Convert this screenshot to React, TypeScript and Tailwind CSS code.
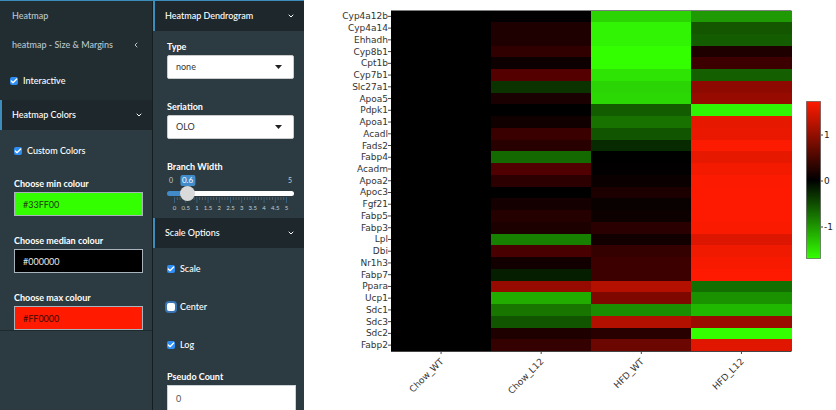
import { useId, useState } from "react";
import type { ReactNode } from "react";
import { Check, ChevronDown, ChevronLeft } from "lucide-react";

type Row = [gene: string, chowL12: string, hfdWt: string, hfdL12: string];

const rows: Row[] = [
  ["Cyp4a12b", "#020000", "#2cd404", "#1f9a04"],
  ["Cyp4a14", "#1e0000", "#31f404", "#145600"],
  ["Ehhadh", "#1e0000", "#31f404", "#145c00"],
  ["Cyp8b1", "#300000", "#33ff00", "#1e0000"],
  ["Cpt1b", "#0c0000", "#33ff00", "#3c0000"],
  ["Cyp7b1", "#540000", "#2ee405", "#146000"],
  ["Slc27a1", "#0b3300", "#2bd405", "#8e0a00"],
  ["Apoa5", "#1a0000", "#2cd804", "#960a00"],
  ["Pdpk1", "#000000", "#145c00", "#31f404"],
  ["Apoa1", "#100000", "#177200", "#e61800"],
  ["Acadl", "#3a0000", "#115500", "#ea1800"],
  ["Fads2", "#280000", "#082a00", "#fc1a00"],
  ["Fabp4", "#146a00", "#000000", "#e61800"],
  ["Acadm", "#500000", "#020000", "#f41a00"],
  ["Apoa2", "#2c0000", "#0a0000", "#fc1a00"],
  ["Apoc3", "#000000", "#1c0000", "#fe1a00"],
  ["Fgf21", "#140000", "#090000", "#fe1a00"],
  ["Fabp5", "#240000", "#0c0000", "#fe1a00"],
  ["Fabp3", "#1c0000", "#2a0000", "#fa1a00"],
  ["Lpl", "#188000", "#120000", "#dc1600"],
  ["Dbi", "#480000", "#340000", "#f01a00"],
  ["Nr1h3", "#120000", "#3c0000", "#f81a00"],
  ["Fabp7", "#061e00", "#3c0000", "#fe1a00"],
  ["Ppara", "#960a00", "#b41000", "#137000"],
  ["Ucp1", "#22ac00", "#7e0800", "#1a9200"],
  ["Sdc1", "#177500", "#1a8e00", "#21b800"],
  ["Sdc3", "#115500", "#b41000", "#9a0c00"],
  ["Sdc2", "#1e0000", "#280000", "#33ff00"],
  ["Fabp2", "#340000", "#6c0600", "#e01600"],
];

const samples = ["Chow_WT", "Chow_L12", "HFD_WT", "HFD_L12"];

const plot = { left: 87, top: 10.5, right: 487.5, bottom: 351 };
const cellW = (plot.right - plot.left) / samples.length;
const cellH = (plot.bottom - plot.top) / rows.length;

function Heatmap() {
  return (
    <svg
      viewBox="0 0 532 410"
      className="block h-auto w-full font-['DejaVu_Sans',sans-serif]"
      role="img"
      aria-label="Gene expression heatmap"
    >
      <defs>
        <linearGradient id="scale" x1="0" y1="0" x2="0" y2="1">
          <stop offset="0" stopColor="#ff1a00" />
          <stop offset="0.5" stopColor="#000000" />
          <stop offset="1" stopColor="#33ff00" />
        </linearGradient>
      </defs>

      <rect x={plot.left} y={plot.top} width={plot.right - plot.left} height={plot.bottom - plot.top} fill="#000" />
      {rows.map(([gene, ...cells], r) => {
        const y = plot.top + r * cellH;
        return (
          <g key={gene}>
            {cells.map((color, c) => (
              <rect
                key={c}
                x={plot.left + (c + 1) * cellW}
                y={y}
                width={cellW}
                height={cellH}
                fill={color}
                shapeRendering="crispEdges"
              />
            ))}
            <path d={`M${plot.left - 3} ${y + cellH / 2}h3`} stroke="#444" />
            <text x={plot.left - 3} y={y + cellH / 2 + 3} textAnchor="end" fontSize="9" fill="#333">
              {gene}
            </text>
          </g>
        );
      })}
      <path d={`M${plot.left} ${plot.bottom + 0.5}H${plot.right}`} stroke="#444" />

      {samples.map((name, c) => {
        const x = plot.left + (c + 0.5) * cellW;
        return (
          <g key={name}>
            <path d={`M${x} ${plot.bottom}v3`} stroke="#444" />
            <text
              transform={`translate(${x + 3} ${plot.bottom + 11}) rotate(-45)`}
              textAnchor="end"
              fontSize="9"
              fill="#333"
            >
              {name}
            </text>
          </g>
        );
      })}

      <rect x="502.5" y="101.5" width="14" height="157" fill="url(#scale)" stroke="#444" strokeOpacity="0.6" />
      {[1, 0, -1].map((v) => (
        <g key={v}>
          <path d={`M517 ${181 - v * 46}h2`} stroke="#444" />
          <text x="520" y={184 - v * 46} fontSize="9" fill="#222">
            {v}
          </text>
        </g>
      ))}
    </svg>
  );
}

function SectionHeader({ children }: { children: ReactNode }) {
  return (
    <button
      type="button"
      className="flex h-[30px] w-full shrink-0 items-center justify-between border-l-2 border-[#3c8dbc] bg-[#1e282c] pr-[9px] pl-[10px] text-left font-medium text-white"
    >
      {children}
      <ChevronDown size={8} strokeWidth={3} />
    </button>
  );
}

function CheckField({ label, checked = false, ring = false }: { label: string; checked?: boolean; ring?: boolean }) {
  const [on, setOn] = useState(checked);
  return (
    <label className="flex h-3 items-center gap-[5px] font-medium text-white">
      <span className="relative flex size-2">
        <input
          type="checkbox"
          checked={on}
          onChange={(e) => setOn(e.target.checked)}
          className={`size-2 appearance-none rounded-[2px] bg-white checked:bg-[#2f8ef5] ${
            ring ? "ring-2 ring-[#3a74b4]" : ""
          }`}
        />
        {on && <Check size={8} strokeWidth={4} className="pointer-events-none absolute inset-0 text-white" />}
      </span>
      {label}
    </label>
  );
}

function ColourField({ label, value, className }: { label: string; value: string; className: string }) {
  const id = useId();
  return (
    <div className="flex flex-col gap-px">
      <label htmlFor={id} className="font-bold text-white">
        {label}
      </label>
      <input
        id={id}
        defaultValue={value}
        className={`h-6 w-full border border-[#a9b3bb] px-2 outline-none ${className}`}
      />
    </div>
  );
}

function SelectField({ label, options }: { label: string; options: string[] }) {
  const id = useId();
  return (
    <div className="flex flex-col gap-px">
      <label htmlFor={id} className="font-bold text-white">
        {label}
      </label>
      <div className="relative">
        <select
          id={id}
          className="block h-6 w-full appearance-none rounded-[2px] border border-[#ccc] bg-white px-2 text-[#333] outline-none"
        >
          {options.map((o) => (
            <option key={o}>{o}</option>
          ))}
        </select>
        <svg viewBox="0 0 7 4" className="pointer-events-none absolute top-[10px] right-3 h-1 w-[7px]">
          <path d="M0 0h7L3.5 4z" fill="#222" />
        </svg>
      </div>
    </div>
  );
}

const tickLabels = ["0", "0.5", "1", "1.5", "2", "2.5", "3", "3.5", "4", "4.5", "5"];

function BranchWidth() {
  const id = useId();
  const [value, setValue] = useState(0.6);
  const pos = `calc(7px + (100% - 14px) * ${value / 5})`;
  return (
    <div className="flex flex-col">
      <label htmlFor={id} className="font-bold text-white">
        Branch Width
      </label>
      <div className="relative flex h-3 items-center justify-between px-[2px] text-[7px] text-[#c3ccd2]">
        <span>0</span>
        <span>5</span>
        <span
          className="absolute -translate-x-1/2 rounded-[2px] bg-[#428bca] px-[2px] text-[8px] leading-[11px] text-white"
          style={{ left: pos }}
        >
          {value}
        </span>
      </div>
      <input
        id={id}
        type="range"
        min={0}
        max={5}
        step={0.1}
        value={value}
        onChange={(e) => setValue(Number(e.target.value))}
        className="relative z-10 block h-[15px] w-full appearance-none bg-transparent [&::-webkit-slider-runnable-track]:h-[5px] [&::-webkit-slider-runnable-track]:rounded-full [&::-webkit-slider-runnable-track]:bg-[linear-gradient(to_right,#428bca_16%,#fff_16%)] [&::-webkit-slider-thumb]:-mt-[5px] [&::-webkit-slider-thumb]:size-[15px] [&::-webkit-slider-thumb]:appearance-none [&::-webkit-slider-thumb]:rounded-full [&::-webkit-slider-thumb]:bg-[#dadada]"
      />
      <svg viewBox="0 0 127 6" className="-mt-[4px] h-[6px] w-full" aria-hidden="true">
        {Array.from({ length: 41 }, (_, i) => (
          <path
            key={i}
            d={`M${7.5 + i * 2.8} 0v${i % 4 === 0 ? 6 : 3}`}
            stroke={i % 4 === 0 ? "#3f7196" : "#64737a"}
            strokeWidth="0.7"
          />
        ))}
      </svg>
      <div className="flex justify-between px-[2px] text-[6px] leading-[10px] text-[#c3ccd2]">
        {tickLabels.map((t) => (
          <span key={t} className="flex w-[11px] justify-center">
            {t}
          </span>
        ))}
      </div>
    </div>
  );
}

export default function App() {
  return (
    <div className="flex h-screen overflow-hidden bg-white font-[Lato,sans-serif] text-[9px] leading-[14px]">
      <aside className="grid w-[304px] shrink-0 grid-cols-2 border-t border-[#3c8dbc] bg-[#2c3b41]">
        <div className="flex flex-col">
          <nav className="flex h-[99px] flex-col bg-[#222d32] px-3 pt-2 font-medium text-[#b8c7ce]">
            <a href="#heatmap">Heatmap</a>
            <a href="#size" className="mt-[15px] flex items-center justify-between">
              heatmap - Size &amp; Margins
              <ChevronLeft size={8} strokeWidth={3} />
            </a>
            <div className="-ml-[2px] pt-[23px]">
              <CheckField label="Interactive" checked />
            </div>
          </nav>
          <SectionHeader>Heatmap Colors</SectionHeader>
          <div className="flex flex-col gap-5 border-b border-[#1f2a2e] pt-[15px] pr-[9px] pl-[14px]">
            <CheckField label="Custom Colors" checked />
            <div className="flex flex-col gap-[18px]">
              <ColourField label="Choose min colour" value="#33FF00" className="bg-[#33ff00] text-[#1c3a10]" />
              <ColourField label="Choose median colour" value="#000000" className="bg-black text-[#e8e8e8]" />
              <ColourField label="Choose max colour" value="#FF0000" className="bg-[#ff1a00] text-[#3a0a04]" />
            </div>
          </div>
        </div>

        <div className="flex flex-col border-l border-[#141d20]">
          <SectionHeader>Heatmap Dendrogram</SectionHeader>
          <div className="flex h-[187px] shrink-0 flex-col pt-[9px] pr-[10px] pl-[14px]">
            <div className="flex flex-col gap-[21px]">
              <SelectField label="Type" options={["none", "row", "column", "both"]} />
              <SelectField label="Seriation" options={["OLO", "GW", "mean", "none"]} />
              <BranchWidth />
            </div>
          </div>
          <SectionHeader>Scale Options</SectionHeader>
          <div className="flex flex-col pt-[15px] pr-2 pl-[14px]">
            <div className="flex flex-col gap-[26px]">
              <CheckField label="Scale" checked />
              <CheckField label="Center" ring />
              <CheckField label="Log" checked />
            </div>
            <label htmlFor="pseudo" className="mt-[19px] font-bold text-white">
              Pseudo Count
            </label>
            <input
              id="pseudo"
              defaultValue="0"
              className="mt-px h-[26px] w-full border border-[#ccd3d8] bg-white px-2 text-[#555] outline-none"
            />
          </div>
        </div>
      </aside>

      <main className="min-w-0 flex-1">
        <Heatmap />
      </main>
    </div>
  );
}
